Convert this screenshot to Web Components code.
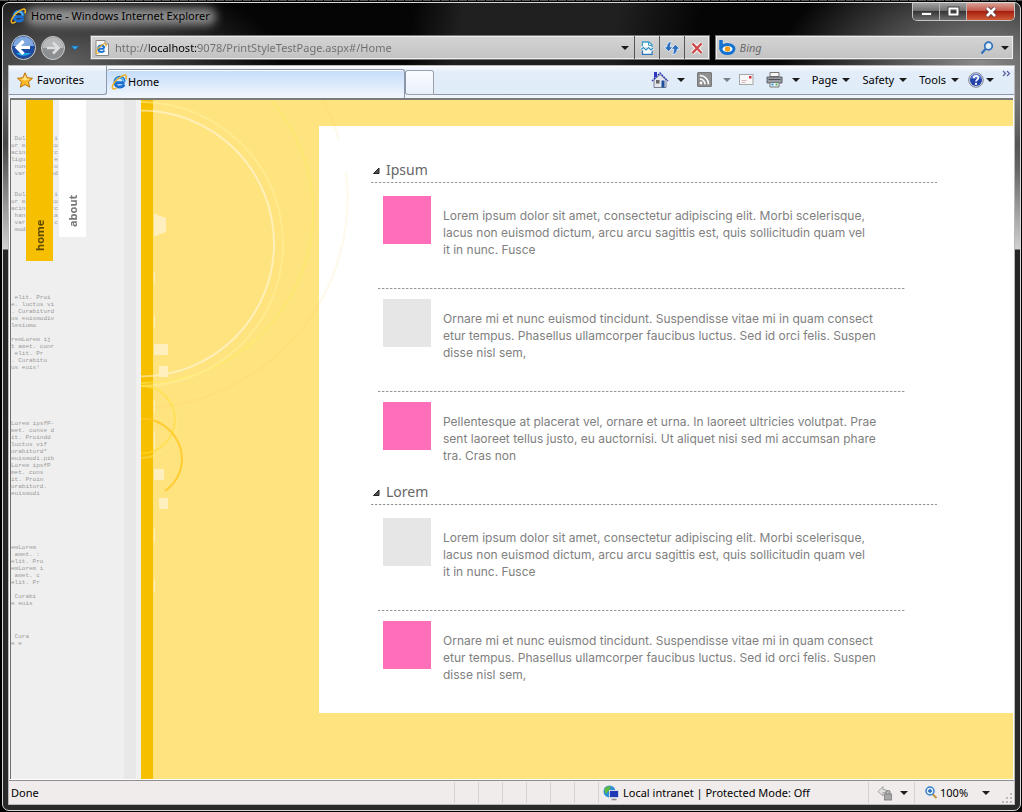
<!DOCTYPE html>
<html lang="en">
<head>
<meta charset="utf-8">
<title>Home - Windows Internet Explorer</title>
<style>
  html { background: #000; }
  body { margin: 0; font: 11px/16px "Noto Sans", "Open Sans", sans-serif; color: #000; }
</style>
</head>
<body>
<browser-window>
  <title-bar slot="title">Home - Windows Internet Explorer</title-bar>
  <nav-bar slot="nav"></nav-bar>
  <tab-strip slot="tabs"></tab-strip>
  <web-page slot="page">
    <side-nav slot="side"></side-nav>
    <topic-section heading="Ipsum">
      <topic-item color="#ff6eb9">Lorem ipsum dolor sit amet, consectetur adipiscing elit. Morbi scelerisque,<br>lacus non euismod dictum, arcu arcu sagittis est, quis sollicitudin quam vel<br>it in nunc. Fusce</topic-item>
      <topic-item color="#e6e6e6">Ornare mi et nunc euismod tincidunt. Suspendisse vitae mi in quam consect<br>etur tempus. Phasellus ullamcorper faucibus luctus. Sed id orci felis. Suspen<br>disse nisl sem,</topic-item>
      <topic-item color="#ff6eb9">Pellentesque at placerat vel, ornare et urna. In laoreet ultricies volutpat. Prae<br>sent laoreet tellus justo, eu auctornisi. Ut aliquet nisi sed mi accumsan phare<br>tra. Cras non</topic-item>
    </topic-section>
    <topic-section heading="Lorem">
      <topic-item color="#e6e6e6">Lorem ipsum dolor sit amet, consectetur adipiscing elit. Morbi scelerisque,<br>lacus non euismod dictum, arcu arcu sagittis est, quis sollicitudin quam vel<br>it in nunc. Fusce</topic-item>
      <topic-item color="#ff6eb9">Ornare mi et nunc euismod tincidunt. Suspendisse vitae mi in quam consect<br>etur tempus. Phasellus ullamcorper faucibus luctus. Sed id orci felis. Suspen<br>disse nisl sem,</topic-item>
    </topic-section>
  </web-page>
  <status-bar slot="status">Done</status-bar>
</browser-window>

<script>
const BASE = `
  :host, *, *::before, *::after { box-sizing: border-box; }
  button { appearance: none; border: 0; margin: 0; padding: 0; background: none; font: inherit; color: inherit; display: flex; align-items: center; }
  input { appearance: none; border: 0; margin: 0; padding: 0; background: none; font: inherit; outline: 0; min-width: 0; }
  svg { display: block; flex: none; }
`;

function define(name, html, setup) {
  const template = document.createElement('template');
  template.innerHTML = html.replace('<style>', '<style>' + BASE);
  customElements.define(name, class extends HTMLElement {
    constructor() {
      super();
      this.attachShadow({ mode: 'open' }).appendChild(template.content.cloneNode(true));
    }
    connectedCallback() { if (setup) setup(this, this.shadowRoot); }
  });
}

const ICONS = {
  ie: [16, `<path d="M13.6 8.7H4.6M13.2 7.6C12.9 4.9 11.1 3.3 8.7 3.3 6 3.3 4 5.4 4 8.2s2 4.9 4.8 4.9c2 0 3.4-.8 4.3-2.5" fill="none" stroke="#1b6fd0" stroke-width="3"/><path d="M12.8 7.6C12.4 5 11 3.7 8.7 3.7 6.2 3.7 4.4 5.6 4.4 8.1" fill="none" stroke="#5fc0f5" stroke-width="1.4"/><path d="M14.8 5.4C16 2.600 15.200.700 13 1.200 9.800 2 4.500 6.200 2.200 10.300.700 13.200 1.100 15.400 3.300 14.900c.8-.2 1.700-.6 2.500-1.200" fill="none" stroke="#f0b323" stroke-width="1.500"/>`],
  page: [16, `<path d="M2 .5h9L14.500 4v11.500H2z" fill="#fafafa" stroke="#888"/><path d="M11 .5V4h3.500" fill="#ddd" stroke="#888"/><path d="M10.500 8.800H4.500M10.300 8C10.100 6.300 9 5.400 7.400 5.400 5.600 5.400 4.200 6.800 4.200 8.700s1.400 3.300 3.300 3.300c1.300 0 2.300-.5 2.900-1.600" fill="none" stroke="#1d74d3" stroke-width="2"/><path d="M11.800 6.500C12.800 4 11.800 3.300 10.300 3.800 7.500 4.800 2.700 9 2 11.500c-.5 2 1 2.300 3 1.200" fill="none" stroke="#eead21" stroke-width="1.200"/>`],
  star: [16, `<path d="M8 .8l2.200 4.900 5.300.6-4 3.600 1.200 5.300L8 12.500l-4.700 2.700 1.200-5.300-4-3.600 5.300-.6z" fill="#fdb927" stroke="#b9720c"/><path d="M8 3l1.500 3.400 3.500.5-5 1.600-4.500-1.600 3-.5z" fill="#ffe28a"/>`],
  home: [18, `<path d="M3 9v7.500h12V9L9 3.500z" fill="#e4e6ee" stroke="#7a7f90"/><path d="M3 1h3v4L3 7.500z" fill="#3038c0"/><path d="M1 10l8-8 8 8" fill="none" stroke="#2c38b8" stroke-width="1.300" stroke-dasharray="2 .7"/><path d="M5 9h3.500v3.500H5z" fill="#666"/><path d="M10.500 9.500h3v7h-3z" fill="#1d4f9c"/>`],
  rss: [15, `<rect width="15" height="15" rx="1.500" fill="#8f8f8f"/><rect x=".5" y=".5" width="14" height="14" rx="1.500" fill="none" stroke="#777"/><circle cx="4" cy="11" r="1.400" fill="#fff"/><path d="M2.800 7a5.200 5.200 0 0 1 5.200 5.200M2.800 3.500a8.700 8.700 0 0 1 8.700 8.700" fill="none" stroke="#fff" stroke-width="1.600"/>`],
  mail: [15, `<rect x=".5" y="2.500" width="13.500" height="10" fill="#f8f8f8" stroke="#a7a7a7"/><path d="M2.500 8.500h5M2.500 10.500h4" stroke="#d5b8b8"/><rect x="10" y="4" width="2.500" height="2.500" fill="#d9333a"/>`],
  print: [17, `<path d="M4 1.500h9v4H4z" fill="#f6f6f6" stroke="#777"/><path d="M1 6h15v6H1z" fill="#9a9ea3" stroke="#5d6165"/><path d="M2.500 8.500h12" stroke="#4b4e52"/><path d="M4 11.500h9V16H4z" fill="#eef5ff" stroke="#777"/><path d="M5.500 13.500h2" stroke="#2d9bd7" stroke-width="2"/><path d="M9.500 13.500h2" stroke="#58b947" stroke-width="2"/>`],
  help: [16, `<circle cx="8" cy="8" r="7.300" fill="#d6d9e4" stroke="#7e8698"/><circle cx="8" cy="8" r="6" fill="#2443a8"/><path d="M3 6.500a5 4.500 0 0 1 10 0z" fill="#5f7fd6"/><path d="M5.800 6.200c0-3 4.500-3 4.500-.3C10.300 7.500 8 7.700 8 9.600" fill="none" stroke="#fff" stroke-width="1.700"/><circle cx="8" cy="11.900" r="1.100" fill="#fff"/>`],
  arrow: [8, `<path d="M0 2h8L4 6z" fill="#1b1b1b"/>`],
  compat: [14, `<path d="M2.500 6V1h6.500l3 3v2" fill="#fff" stroke="#3e9fc8" stroke-width="1.300"/><path d="M8.500 1v3.500H12" fill="none" stroke="#3e9fc8"/><path d="M2.500 9v4.300h9.500V9" fill="#fff" stroke="#2f78bc" stroke-width="1.300"/><path d="M1 8.500l2.500-2L6 9l2.500-2.500L11 9l2-2" fill="none" stroke="#fff" stroke-width="3"/><path d="M1 8.500l2.500-2L6 9l2.500-2.500L11 9l2-2" fill="none" stroke="#2c8cc0" stroke-width="1.200"/>`],
  refresh: [16, `<g fill="#2d6fbd" stroke="#e8f2ff" stroke-width=".8"><path d="M4.500 11.500L0 7h2.700C2.700 4 4.500 1.500 8 1.500 6.800 3 6.300 4.500 6.300 7H9z"/><path d="M11.500 4.500L16 9h-2.700c0 3-1.800 5.500-5.300 5.500 1.200-1.500 1.700-3 1.700-5.500H7z"/></g>`],
  stop: [14, `<path d="M2.500 2.500l9 9.500M11.500 2.500l-9 9.500" stroke="#f6f6f6" stroke-width="4.500"/><path d="M2.500 2.500l9 9.500M11.500 2.500l-9 9.500" stroke="#d04a4a" stroke-width="2.400"/>`],
  bing: [18, `<path d="M3 1v9.500" stroke="#1473d2" stroke-width="3.500"/><ellipse cx="9.500" cy="10" rx="6.500" ry="4.500" fill="#fff" stroke="#1473d2" stroke-width="3"/><circle cx="9.500" cy="10" r="2.700" fill="#f59e1d"/>`],
  search: [14, `<circle cx="8.500" cy="5" r="3.800" fill="#e3effa" stroke="#2f72bd" stroke-width="1.700"/><path d="M5.500 8L1.500 12.500" stroke="#2f72bd" stroke-width="2.200"/>`],
  globe: [16, `<circle cx="6.500" cy="6.500" r="6" fill="#2f8fd5"/><path d="M1.500 4C3 1.500 6 .8 8 1.500 6.500 3 8 4.500 5.500 6 4 7 3.500 9.500 2 8zM6 9c2-1 3 .5 2.500 2.500L6 12z" fill="#5cba3e"/><rect x="6.500" y="5.500" width="9" height="7" fill="#2039b5" stroke="#cfd5e4"/><path d="M8.500 14.500h5" stroke="#8b909c" stroke-width="1.600"/>`],
  lock: [16, `<path d="M1 6.500l5-5v3c3.500 0 5.500 1.500 6 5C10.500 7.500 8.500 7.300 6 7.500v3.500z" fill="#e2e2e2" stroke="#999" stroke-width=".9"/><rect x="7.500" y="9" width="7" height="6" fill="#a8a8a8" stroke="#777" stroke-width=".8"/><path d="M9 9V7.500c0-2.500 4-2.500 4 0V9" fill="none" stroke="#888" stroke-width="1.300"/>`],
  zoom: [13, `<path d="M7.500 8l4 4" stroke="#c79645" stroke-width="2.200"/><circle cx="5" cy="5" r="4" fill="#d9ecfb" stroke="#3a7fc8" stroke-width="1.500"/><path d="M5 3v4M3 5h4" stroke="#2566b2" stroke-width="1.400"/>`]
};
const icon = (name, color) => {
  const [size, body] = ICONS[name];
  const art = color ? body.replace('#1b1b1b', color) : body;
  return `<svg width="${size}" height="${size}" viewBox="0 0 ${size} ${size}" aria-hidden="true">${art}</svg>`;
};

define('browser-window', `<style>
  :host { min-height: 100vh; padding: 2px 1px 1px 2px; background: repeating-linear-gradient(90deg, #555 0 8px, #000 8px 9px) top / 100% 1px no-repeat #000; display: flex; }
  .frame {
    flex: 1; min-width: 0; display: flex; flex-direction: column; border: 1px solid #d8d8d8; border-radius: 7px; padding: 0 5px 5px;
    background:
      radial-gradient(220px 90px at 60px 60px, #606060, #60606000) no-repeat,
      radial-gradient(200px 110px at 96% 60px, #8c8c8c, #8c8c8c00) no-repeat,
      linear-gradient(100deg, #0000 0 40%, #202020 45% 60%, #0000 68%) top / 100% 62px no-repeat,
      linear-gradient(#5550 60px, #555 90px, #444 140px, #d0d0d0 246px, #262626 247px, #2a2a2a) no-repeat,
      #050505;
  }
  .client { flex: 1; display: flex; flex-direction: column; border: 1px solid #b9b9b9; background: #fff; min-width: 0; }
  .page { flex: 1; display: flex; margin: 0 1px; border: solid #707070; border-width: 2px 0 0 1px; border-top-color: #7a7a7a; }
  ::slotted(web-page) { flex: 1; }
</style>
<div class="frame">
  <slot name="title"></slot>
  <slot name="nav"></slot>
  <div class="client">
    <slot name="tabs"></slot>
    <div class="page"><slot name="page"></slot></div>
    <slot name="status"></slot>
  </div>
</div>`);

define('title-bar', `<style>
  :host { display: flex; justify-content: space-between; height: 29px; padding-left: 2px; font-size: 11px; }
  .name { display: flex; align-items: center; gap: 5px; height: 26px; position: relative; white-space: nowrap; }
  .name::before { content: ""; position: absolute; inset: 5px -6px 4px 16px; background: #b4b4b4; opacity: .75; filter: blur(5px); border-radius: 8px; }
  .name > * { position: relative; }
  .controls { display: flex; height: 18px; border: 1px solid #c4c4c4; border-top: 0; border-radius: 0 0 5px 5px; overflow: hidden; }
  .controls button { width: 27px; justify-content: center; background: linear-gradient(#a0a0a0, #707070 45%, #363636 50%, #6d6d6d); border-right: 1px solid #b6b6b6; }
  .controls button.close { width: 47px; border-right: 0; background: linear-gradient(#d9a297, #c4584a 45%, #a51f10 50%, #cf5a35); }
</style>
<div class="name">${icon('ie')}<span><slot></slot></span></div>
<div class="controls">
  <button aria-label="Minimize"><svg width="13" height="12"><rect x="1.500" y="6.500" width="10" height="3" fill="#fff" stroke="#555"/></svg></button>
  <button aria-label="Maximize"><svg width="13" height="12"><path d="M2.500 2.500h8v6h-8z" fill="none" stroke="#444" stroke-width="4"/><path d="M2.500 2.500h8v6h-8z" fill="none" stroke="#fff" stroke-width="2"/></svg></button>
  <button class="close" aria-label="Close"><svg width="14" height="12"><path d="M3 2l8 8M11 2l-8 8" stroke="#5b3a3a" stroke-width="4.500"/><path d="M3 2l8 8M11 2l-8 8" stroke="#fff" stroke-width="2.600"/></svg></button>
</div>`);

define('nav-bar', `<style>
  :host { display: flex; align-items: center; height: 33px; padding: 0 1px 2px 3px; font-size: 11px; }
  .travel { display: flex; align-items: center; gap: 5px; margin-right: 10px; border-radius: 14px; }
  .field { display: flex; align-items: center; min-width: 0; height: 25px; border: 1px solid #777; background: linear-gradient(#d4d4d4, #c2c2c2); box-shadow: inset 0 0 0 1px #eee; }
  .address { flex: 622; padding-left: 3px; }
  .address input {
    flex: 1; height: 21px; margin-left: 5px; color: #6d6d6d; -webkit-text-fill-color: transparent;
    background: linear-gradient(90deg, #6d6d6d 34px, #000 34px 83px, #6d6d6d 83px); -webkit-background-clip: text; background-clip: text;
  }
  .address button { height: 23px; width: 25px; justify-content: center; border-left: 1px solid #555; }
  .address button.drop { width: 17px; border: 0; }
  .find { flex: 295; margin-left: 5px; padding: 0 4px 0 2px; gap: 4px; }
  .find input { flex: 1; height: 21px; }
  .find input::placeholder { color: #6b6b6b; font-style: italic; opacity: 1; }
  .find button + button { margin-left: 3px; }
</style>
<div class="travel">
  <button aria-label="Back"><svg width="25" height="25"><circle cx="12.500" cy="12.500" r="12" fill="#33415e" stroke="#cfd8e6"/><circle cx="12.500" cy="12.500" r="10.800" fill="#1a4ba6"/><path d="M2 11a10.500 9.500 0 0 1 21 0z" fill="#7fa8df"/><path d="M5 18a9 6 0 0 0 15 0z" fill="#1fa6e4"/><path d="M12.500 6l-6.500 6.500 6.500 6.500M6.500 12.500H19" fill="none" stroke="#fff" stroke-width="3.200"/></svg></button>
  <button aria-label="Forward"><svg width="24" height="24"><circle cx="12" cy="12" r="11.500" fill="#8d9093" stroke="#c9c9c9"/><path d="M1.500 12a10.500 10.500 0 0 1 21 0z" fill="#b7b9ba"/><path d="M12 6.500l5.500 5.500-5.500 5.500M17 12H6" fill="none" stroke="#dedede" stroke-width="2.600"/></svg></button>
  <button aria-label="Recent pages"><svg width="10" height="8"><path d="M1 2h8L5 6z" fill="#35a3e8" stroke="#1a5f9c" stroke-width=".8"/></svg></button>
</div>
<div class="field address">${icon('page')}
  <input type="text" aria-label="Address" value="http://localhost:9078/PrintStyleTestPage.aspx#/Home">
  <button class="drop" aria-label="Show address list">${icon('arrow')}</button>
  <button aria-label="Compatibility view">${icon('compat')}</button>
  <button aria-label="Refresh">${icon('refresh')}</button>
  <button aria-label="Stop">${icon('stop')}</button>
</div>
<div class="field find">${icon('bing')}
  <input type="text" aria-label="Search" placeholder="Bing">
  <button aria-label="Search">${icon('search')}</button>
  <button aria-label="Search options">${icon('arrow')}</button>
</div>`);

define('tab-strip', `<style>
  :host { display: flex; height: 32px; padding-bottom: 3px; background: linear-gradient(#fafcff, #e3edf9 6px, #e0ecf9 28px, #f0f5fc 29px); font-size: 11px; white-space: nowrap; }
  .favorites { width: 98px; gap: 4px; padding: 0 0 1px 8px; border-bottom: 1px solid #8d97aa; border-right: 1px solid #8d97aa; border-bottom-right-radius: 3px; }
  .tab { flex: 0 1 298px; gap: 1px; padding: 0 0 4px 4px; margin: 3px 0 -3px; border: 1px solid #8d97aa; border-left: 0; border-bottom: 0; border-radius: 3px 3px 0 0; background: linear-gradient(#c3dcfb, #f0f5fc 26px); box-shadow: inset 0 1px #fff; }
  .new { width: 29px; margin-top: 4px; border: 1px solid #9aa1ad; border-left-color: #8d97aa; border-radius: 3px 3px 0 3px; background: linear-gradient(#fafcff, #e8f1fb); }
  .commands { flex: 1; display: flex; align-items: center; justify-content: flex-end; gap: 12px; padding: 0 3px 1px 0; border-bottom: 1px solid #8d97aa; }
  .commands button { gap: 5px; }
  .commands button.split { width: 34px; gap: 0; justify-content: space-between; }
  .commands .tight { margin-left: -4px; }
  .help { gap: 2px !important; margin-left: -3px; }
  .more { margin-left: -4px; padding-bottom: 12px !important; }
</style>
<button class="favorites">${icon('star')}Favorites</button>
<button class="tab">${icon('ie')}Home</button>
<button class="new" aria-label="New tab"></button>
<div class="commands">
  <button class="split" aria-label="Home page">${icon('home')}${icon('arrow')}</button>
  <button class="split" aria-label="Feeds">${icon('rss')}${icon('arrow', '#7b7f86')}</button>
  <button class="tight" aria-label="Read mail">${icon('mail')}</button>
  <button class="split" aria-label="Print">${icon('print')}${icon('arrow')}</button>
  <button>Page${icon('arrow')}</button>
  <button>Safety${icon('arrow')}</button>
  <button>Tools${icon('arrow')}</button>
  <button class="help" aria-label="Help">${icon('help')}${icon('arrow')}</button>
  <button class="more" aria-label="More commands"><svg width="9" height="7"><path d="M1 1l2.500 2.500L1 6M5 1l2.500 2.500L5 6" fill="none" stroke="#5560a0" stroke-width="1.200"/></svg></button>
</div>`);

define('web-page', `<style>
  :host { display: flex; position: relative; overflow: hidden; background: #ffe37f; color: #808080; }
  .strip { flex: none; width: 12px; background: #f6bf00; }
  main { flex: 1; min-width: 0; margin: 26px 0 65px 166px; align-self: flex-start; padding: 33px 76px 13px 52px; background: #fff; }
  .rings { position: absolute; left: 130px; top: 0; pointer-events: none; }
</style>
<slot name="side"></slot>
<div class="strip"></div>
<main><slot></slot></main>
<svg class="rings" width="220" height="520" viewBox="141 100 220 520" fill="none" aria-hidden="true">
  <path d="M323 100Q333 118 339 140M346 172A210 210 0 0 1 141 408" stroke="#ffc83c" stroke-opacity=".1" stroke-width="2"/>
  <circle cx="142" cy="212" r="171" stroke="#ffee66" stroke-opacity=".5" stroke-width="2"/>
  <circle cx="141" cy="244" r="142" stroke="#fff4a0" stroke-opacity=".5" stroke-width="2"/>
  <circle cx="141" cy="243.500" r="133" stroke="#fff" stroke-opacity=".46" stroke-width="2"/>
  <circle cx="141" cy="422" r="36" stroke="#ffee80" stroke-opacity=".4" stroke-width="2"/>
  <circle cx="141" cy="419.500" r="34" stroke="#ffe030" stroke-opacity=".5" stroke-width="2"/>
  <path d="M141 418.500A41 41 0 0 1 182 459.500A41 41 0 0 1 165 491" stroke="#ffc71e" stroke-opacity=".8" stroke-width="2"/>
  <g fill="#ffefbe">
    <path d="M154 213.500L166 218V232L154 236.500z"/>
    <path d="M154 344h14v11h-14zM159 366h9v11h-9zM154 469h10v11h-10zM159 498h9v11h-9z"/>
    <path d="M154 272h1v11h-1zM154 316h1v11h-1zM154 400h1v13h-1zM154 431h1v19h-1zM154 529h1v13h-1zM154 580h1v12h-1z"/>
  </g>
</svg>`);

define('side-nav', `<style>
  :host { display: block; position: relative; flex: none; width: 130px; background: linear-gradient(90deg, #efefef 113px, #e8e8e8 113px 125px, #f0f0f0 125px); }
  .print { position: absolute; left: 0; top: 35px; }
  pre { margin: 0; font: 6px/7px "Liberation Mono", monospace; color: #9a9a9a; }
  nav { position: relative; display: flex; align-items: flex-start; gap: 6px; padding-left: 15px; }
  a { display: flex; align-items: center; width: 27px; height: 137px; padding-top: 10px; writing-mode: vertical-rl; transform: rotate(180deg); font: bold 11px/27px "Noto Sans", "Open Sans", sans-serif; text-decoration: none; background: #fff; color: #777; }
  a.current { height: 161px; background: #f6bf00; color: #5f4a00; }
  .b2 { margin-top: 61px; } .b3 { margin-top: 49px; } .b4 { margin-top: 47px; } .b5 { margin-top: 26px; }
</style>
<div class="print" aria-hidden="true">
<pre class="b1"> Dolo       i
or mi      co
acing      rc
ligul       e
 nunc      tu
 vari      od


 Dolo       i
or mi      co
acing      rc
 hand      ta
 vari       c
 mode</pre>
<pre class="b2"> elit. Proi
e. luctus vi
. Curabiturd
us euismodiv
lesiumo

remLorem ij
t amet. conr
 elit. Pr
. Curabitu
us euis!</pre>
<pre class="b3">Lorem ipsfP-
met. conse d
it. Proindd
luctus vif
urabiturd*
euismodi.pib
Lorem ipsfP
met. cons
it. Proin
urabiturd.
euismodi</pre>
<pre class="b4">emLorem
 amet. :
elit. Pro
emLorem i
 amet. c
elit. Pr

 Curabi
e euis</pre>
<pre class="b5"> Cura
e e</pre>
</div>
<nav><a class="current" href="#/Home">home</a><a href="#/About">about</a></nav>`);

define('topic-section', `<style>
  :host { display: block; --rule: repeating-linear-gradient(90deg, #949494 0 2px, #d8d8d8 2px 3px, #fff 3px 4px); }
  h2 { margin: 0; font: inherit; height: 24px; background: var(--rule) bottom / 100% 1px no-repeat; }
  button { height: 22px; gap: 6px; padding-left: 2px; font-size: 14px; line-height: 20px; color: #666; }
  .list { display: block; margin: 13px 32px 0 7px; }
  ::slotted(topic-item:not(:first-of-type)) { margin-top: 13px; padding-top: 11px; background: var(--rule) top / 100% 1px no-repeat; }
</style>
<h2><button aria-expanded="true"><svg width="7" height="7"><path d="M.5 6.500h5.500v-5.500z" fill="#555" stroke="#222"/></svg><span></span></button></h2>
<div class="list" role="list"><slot></slot></div>`, (host, root) => {
  root.querySelector('span').textContent = host.getAttribute('heading');
});

define('topic-item', `<style>
  :host { display: flex; gap: 12px; padding-left: 5px; }
  .swatch { flex: none; width: 48px; height: 48px; }
  p { margin: 0; min-height: 79px; padding-top: 11px; font: 12px/17px Inter, "Noto Sans", sans-serif; white-space: nowrap; }
</style>
<div class="swatch"></div><p><slot></slot></p>`, (host, root) => {
  host.setAttribute('role', 'listitem');
  root.querySelector('.swatch').style.background = host.getAttribute('color');
});

define('status-bar', `<style>
  :host { display: flex; height: 25px; padding: 2px 1px 1px; border-top: 1px solid #fff; box-shadow: inset 0 1px #8e8e8e; background: #f0ecec; font-size: 11px; line-height: 22px; white-space: nowrap; position: relative; }
  .text { flex: 1; padding-left: 1px; }
  .cell { flex: none; width: 24px; border-left: 1px solid #d6d2d2; display: flex; align-items: center; }
  .zone { width: 270px; gap: 4px; padding-left: 4px; }
  .privacy { width: 46px; padding-left: 8px; }
  .privacy button { gap: 7px; }
  .level { width: 99px; padding-left: 10px; }
  .level button { gap: 2px; }
  .level button svg:last-child { margin-left: 12px; }
  .grip { position: absolute; right: 1px; bottom: 1px; }
</style>
<div class="text"><slot></slot></div>
<div class="cell"></div><div class="cell"></div><div class="cell"></div><div class="cell"></div><div class="cell"></div><div class="cell"></div>
<div class="cell zone">${icon('globe')}<span>Local intranet | Protected Mode: Off</span></div>
<div class="cell privacy"><button aria-label="Privacy report">${icon('lock')}${icon('arrow')}</button></div>
<div class="cell level"><button>${icon('zoom')}<span>100%</span>${icon('arrow')}</button></div>
<svg class="grip" width="11" height="11" aria-hidden="true"><path d="M8 1h2v2h-2zM8 5h2v2h-2zM4 5h2v2h-2zM8 9h2v2h-2zM4 9h2v2h-2zM0 9h2v2h-2z" fill="#bdb8b8"/></svg>`);
</script>
</body>
</html>
